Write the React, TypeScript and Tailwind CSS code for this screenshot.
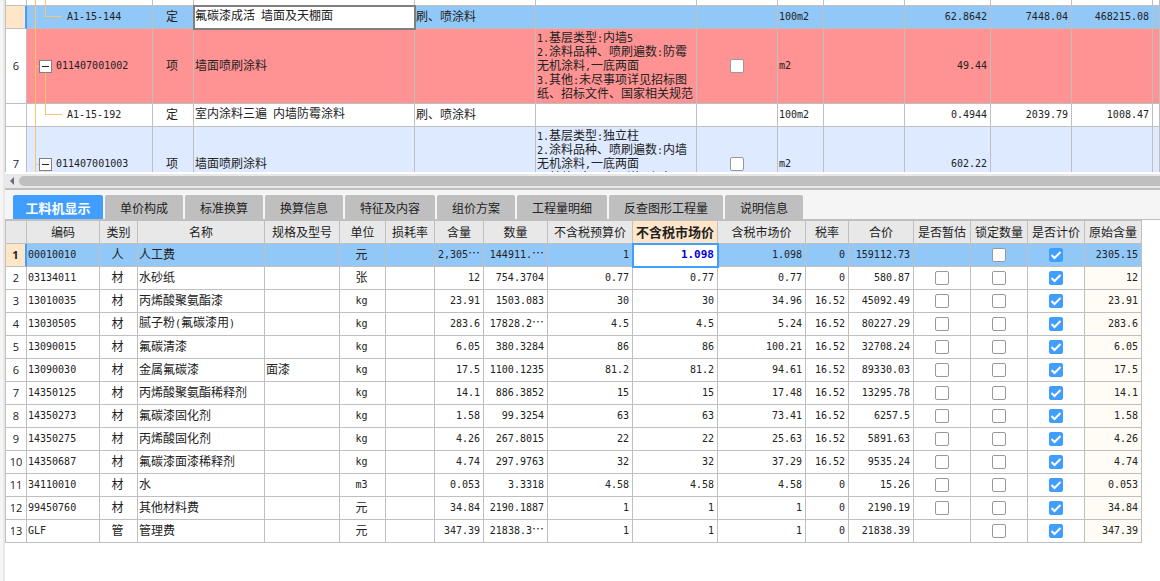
import { useState } from "react";
import type { ReactNode } from "react";

interface BillRow {
  no: string;
  code: string;
  kind: string;
  name: string;
  trade: string;
  features: string[];
  unit: string;
  quantity: string;
  price: string;
  total: string;
  child: boolean;
  tone: string;
  selected?: boolean;
}

interface Resource {
  code: string;
  kind: string;
  name: string;
  spec: string;
  unit: string;
  content: string;
  quantity: string;
  budget: string;
  market: string;
  taxed: string;
  rate: string;
  total: string;
  original: string;
  canEstimate: boolean;
}

const billWidths = [
  "w-[21px]", "w-[126px]", "w-[41px]", "w-[221px]", "w-[121px]", "w-[161px]", "w-[81px]",
  "w-[46px]", "w-[81px]", "w-[86px]", "w-[81px]", "w-[81px]", "",
];

const billRows: BillRow[] = [
  { no: "", code: "A1-15-144", kind: "定", name: "氟碳漆成活 墙面及天棚面", trade: "刷、喷涂料", features: [], unit: "100m2", quantity: "62.8642", price: "7448.04", total: "468215.08", child: true, tone: "bg-[#92c8f7]", selected: true },
  { no: "6", code: "011407001002", kind: "项", name: "墙面喷刷涂料", trade: "", features: ["1.基层类型:内墙5", "2.涂料品种、喷刷遍数:防霉", "无机涂料,一底两面", "3.其他:未尽事项详见招标图", "纸、招标文件、国家相关规范"], unit: "m2", quantity: "49.44", price: "", total: "", child: false, tone: "bg-[#ff9292]" },
  { no: "", code: "A1-15-192", kind: "定", name: "室内涂料三遍 内墙防霉涂料", trade: "刷、喷涂料", features: [], unit: "100m2", quantity: "0.4944", price: "2039.79", total: "1008.47", child: true, tone: "bg-white" },
  { no: "7", code: "011407001003", kind: "项", name: "墙面喷刷涂料", trade: "", features: ["1.基层类型:独立柱", "2.涂料品种、喷刷遍数:内墙", "无机涂料,一底两面", "3.其他:未尽事项详见招标图", "纸、招标文件、国家相关规范"], unit: "m2", quantity: "602.22", price: "", total: "", child: false, tone: "bg-[#deeaff]" },
];

const tabs = [
  "工料机显示", "单价构成", "标准换算", "换算信息", "特征及内容",
  "组价方案", "工程量明细", "反查图形工程量", "说明信息",
];

const resourceColumns = [
  { label: "", width: "w-[21px]" },
  { label: "编码", width: "w-[73px]" },
  { label: "类别", width: "w-[38px]" },
  { label: "名称", width: "w-[127px]" },
  { label: "规格及型号", width: "w-[75px]" },
  { label: "单位", width: "w-[46px]" },
  { label: "损耗率", width: "w-[49px]" },
  { label: "含量", width: "w-[49px]" },
  { label: "数量", width: "w-[64px]" },
  { label: "不含税预算价", width: "w-[85px]" },
  { label: "不含税市场价", width: "w-[85px]" },
  { label: "含税市场价", width: "w-[88px]" },
  { label: "税率", width: "w-[43px]" },
  { label: "合价", width: "w-[65px]" },
  { label: "是否暂估", width: "w-[57px]" },
  { label: "锁定数量", width: "w-[57px]" },
  { label: "是否计价", width: "w-[57px]" },
  { label: "原始含量", width: "w-[57px]" },
];

const resources: Resource[] = [
  { code: "00010010", kind: "人", name: "人工费", spec: "", unit: "元", content: "2,305…", quantity: "144911.…", budget: "1", market: "1.098", taxed: "1.098", rate: "0", total: "159112.73", original: "2305.15", canEstimate: false },
  { code: "03134011", kind: "材", name: "水砂纸", spec: "", unit: "张", content: "12", quantity: "754.3704", budget: "0.77", market: "0.77", taxed: "0.77", rate: "0", total: "580.87", original: "12", canEstimate: true },
  { code: "13010035", kind: "材", name: "丙烯酸聚氨酯漆", spec: "", unit: "kg", content: "23.91", quantity: "1503.083", budget: "30", market: "30", taxed: "34.96", rate: "16.52", total: "45092.49", original: "23.91", canEstimate: true },
  { code: "13030505", kind: "材", name: "腻子粉(氟碳漆用)", spec: "", unit: "kg", content: "283.6", quantity: "17828.2…", budget: "4.5", market: "4.5", taxed: "5.24", rate: "16.52", total: "80227.29", original: "283.6", canEstimate: true },
  { code: "13090015", kind: "材", name: "氟碳清漆", spec: "", unit: "kg", content: "6.05", quantity: "380.3284", budget: "86", market: "86", taxed: "100.21", rate: "16.52", total: "32708.24", original: "6.05", canEstimate: true },
  { code: "13090030", kind: "材", name: "金属氟碳漆", spec: "面漆", unit: "kg", content: "17.5", quantity: "1100.1235", budget: "81.2", market: "81.2", taxed: "94.61", rate: "16.52", total: "89330.03", original: "17.5", canEstimate: true },
  { code: "14350125", kind: "材", name: "丙烯酸聚氨酯稀释剂", spec: "", unit: "kg", content: "14.1", quantity: "886.3852", budget: "15", market: "15", taxed: "17.48", rate: "16.52", total: "13295.78", original: "14.1", canEstimate: true },
  { code: "14350273", kind: "材", name: "氟碳漆固化剂", spec: "", unit: "kg", content: "1.58", quantity: "99.3254", budget: "63", market: "63", taxed: "73.41", rate: "16.52", total: "6257.5", original: "1.58", canEstimate: true },
  { code: "14350275", kind: "材", name: "丙烯酸固化剂", spec: "", unit: "kg", content: "4.26", quantity: "267.8015", budget: "22", market: "22", taxed: "25.63", rate: "16.52", total: "5891.63", original: "4.26", canEstimate: true },
  { code: "14350687", kind: "材", name: "氟碳漆面漆稀释剂", spec: "", unit: "kg", content: "4.74", quantity: "297.9763", budget: "32", market: "32", taxed: "37.29", rate: "16.52", total: "9535.24", original: "4.74", canEstimate: true },
  { code: "34110010", kind: "材", name: "水", spec: "", unit: "m3", content: "0.053", quantity: "3.3318", budget: "4.58", market: "4.58", taxed: "4.58", rate: "0", total: "15.26", original: "0.053", canEstimate: true },
  { code: "99450760", kind: "材", name: "其他材料费", spec: "", unit: "元", content: "34.84", quantity: "2190.1887", budget: "1", market: "1", taxed: "1", rate: "0", total: "2190.19", original: "34.84", canEstimate: true },
  { code: "GLF", kind: "管", name: "管理费", spec: "", unit: "元", content: "347.39", quantity: "21838.3…", budget: "1", market: "1", taxed: "1", rate: "0", total: "21838.39", original: "347.39", canEstimate: false },
];

// Latin runs are set half as wide as a Chinese character, so columns line up
function Mixed({ text }: { text: string }) {
  const runs = text.match(/[\x20-\x7e]+|[^\x20-\x7e]+/g) ?? [];
  return (
    <>
      {runs.map((run, i) =>
        run.charCodeAt(0) < 127 ? (
          <span key={i} className="font-['DejaVu_Sans_Mono',monospace] text-[10px]">
            {run}
          </span>
        ) : (
          run
        )
      )}
    </>
  );
}

function Cell({ children, align = "text-left", tone = "" }: { children?: ReactNode; align?: string; tone?: string }) {
  return (
    <td className={`overflow-hidden border-r border-b border-[#bfbfbf] pt-0 pr-[3px] pb-0.5 pl-px whitespace-nowrap ${align} ${tone}`}>
      {children}
    </td>
  );
}

function CheckCell({ children, tone = "" }: { children?: ReactNode; tone?: string }) {
  return <td className={`border-r border-b border-[#bfbfbf] p-0 ${tone}`}>{children}</td>;
}

function RowNumber({ value, active }: { value: string; active?: boolean }) {
  return (
    <th
      scope="row"
      className={`border-b border-[#bfbfbf] font-['Open_Sans',sans-serif] text-[11px] ${
        active ? "border-r-2 border-r-[#409eff] bg-[#ffe6c9] font-bold" : "border-r bg-white font-normal"
      }`}
    >
      {value}
    </th>
  );
}

function Check({ label, initial = false }: { label: string; initial?: boolean }) {
  const [checked, setChecked] = useState(initial);
  return (
    <span className="relative mx-auto block size-3.5">
      <input
        type="checkbox"
        aria-label={label}
        checked={checked}
        onChange={(e) => setChecked(e.target.checked)}
        className="block size-3.5 appearance-none rounded-xs border border-[#999999] bg-white checked:border-[#409eff] checked:bg-[#409eff]"
      />
      {checked && (
        <svg viewBox="0 0 14 14" className="pointer-events-none absolute inset-0 size-3.5" aria-hidden="true">
          <path d="M2.5 7 L5.5 10 L11.5 4" fill="none" stroke="#fff" strokeWidth="2" />
        </svg>
      )}
    </span>
  );
}

function TreeLines({ child }: { child: boolean }) {
  return (
    <svg className="absolute inset-0 size-full" fill="#ffc36b" shapeRendering="crispEdges" aria-hidden="true">
      <rect x="8" y="0" width="1" height="100%" />
      {child ? (
        <>
          <rect x="18" y="0" width="1" height="45%" />
          <rect x="18" y="45%" width="17" height="1" />
        </>
      ) : (
        <>
          <rect x="9" y="50%" width="4" height="1" />
          <rect x="18" y="50%" width="1" height="50%" />
        </>
      )}
    </svg>
  );
}

function BillTable() {
  return (
    <table className="w-full table-fixed border-separate border-spacing-0 border-l border-[#bfbfbf]">
      <colgroup>
        {billWidths.map((width, i) => (
          <col key={i} className={width} />
        ))}
      </colgroup>
      <tbody>
        <tr className="h-1.5">
          {billWidths.map((_, i) => (
            <td key={i} className="relative border-r border-b border-[#bfbfbf] p-0">
              {i === 1 && (
                <svg className="absolute inset-0 size-full" fill="#ffc36b" shapeRendering="crispEdges" aria-hidden="true">
                  <rect x="8" y="0" width="1" height="100%" />
                  <rect x="18" y="0" width="1" height="100%" />
                </svg>
              )}
            </td>
          ))}
        </tr>
        {billRows.map((row) => (
          <tr key={row.code} className={`${row.tone} ${row.child ? "h-[23px]" : "h-[75px]"}`}>
            <RowNumber value={row.no} active={row.selected} />
            <td className="relative border-r border-b border-[#bfbfbf] p-0">
              <TreeLines child={row.child} />
              <div className={`relative flex items-center ${row.child ? "pl-10" : "gap-1 pl-3"}`}>
                {!row.child && (
                  <button aria-label="折叠" className="flex size-[13px] items-center justify-center border border-[#808080] bg-white">
                    <span className="h-px w-[7px] bg-[#222222]" />
                  </button>
                )}
                <Mixed text={row.code} />
              </div>
            </td>
            <Cell align="text-center">{row.kind}</Cell>
            {row.selected ? (
              <td className="relative border-r border-b border-[#bfbfbf] bg-white pt-0 pr-[3px] pb-0.5 pl-px whitespace-nowrap outline-2 -outline-offset-1 outline-[#808080]">
                <Mixed text={row.name} />
              </td>
            ) : (
              <Cell>
                <Mixed text={row.name} />
              </Cell>
            )}
            <Cell>{row.trade}</Cell>
            <Cell>
              {row.features.map((line) => (
                <div key={line} className="h-3.5 leading-3.5">
                  <Mixed text={line} />
                </div>
              ))}
            </Cell>
            <CheckCell>{!row.child && <Check label={`${row.code} 锁定综合单价`} />}</CheckCell>
            <Cell><Mixed text={row.unit} /></Cell>
            <Cell />
            <Cell align="text-right"><Mixed text={row.quantity} /></Cell>
            <Cell align="text-right"><Mixed text={row.price} /></Cell>
            <Cell align="text-right"><Mixed text={row.total} /></Cell>
            <Cell />
          </tr>
        ))}
      </tbody>
    </table>
  );
}

function ResourceTable() {
  const [price, setPrice] = useState("1.098");
  return (
    <table className="w-full table-fixed border-separate border-spacing-0 border-l border-[#bfbfbf]">
      <colgroup>
        {resourceColumns.map((column) => (
          <col key={column.label} className={column.width} />
        ))}
        <col />
      </colgroup>
      <thead>
        <tr className="h-6">
          {resourceColumns.map((column) => (
            <th
              key={column.label}
              scope="col"
              className={`border-t border-r border-b border-[#bfbfbf] p-0 whitespace-nowrap ${
                column.label === "不含税市场价" ? "bg-[#ffe6c9] text-[13px] font-bold" : "bg-[#e8e8e8] font-normal"
              }`}
            >
              {column.label}
            </th>
          ))}
          <td />
        </tr>
      </thead>
      <tbody>
        {resources.map((row, i) => {
          const tone = i === 0 ? "bg-[#92c8f7]" : "";
          return (
            <tr key={row.code} className="h-[23px]">
              <RowNumber value={String(i + 1)} active={i === 0} />
              <Cell tone={tone}><Mixed text={row.code} /></Cell>
              <Cell tone={tone} align="text-center">{row.kind}</Cell>
              <Cell tone={tone}><Mixed text={row.name} /></Cell>
              <Cell tone={tone}>{row.spec}</Cell>
              <Cell tone={tone} align="text-center"><Mixed text={row.unit} /></Cell>
              <Cell tone={tone} />
              <Cell tone={tone} align="text-right"><Mixed text={row.content} /></Cell>
              <Cell tone={tone} align="text-right"><Mixed text={row.quantity} /></Cell>
              <Cell tone={tone} align="text-right"><Mixed text={row.budget} /></Cell>
              {i === 0 ? (
                <td className="relative border-r border-b border-[#bfbfbf] bg-white p-0 outline-2 -outline-offset-1 outline-[#409eff]">
                  <input
                    aria-label="不含税市场价"
                    value={price}
                    onChange={(e) => setPrice(e.target.value)}
                    className="block h-5 w-full bg-transparent pr-[3px] pb-0.5 text-right font-['DejaVu_Sans_Mono',monospace] text-[11px] font-bold text-[#0000e6] outline-none"
                  />
                </td>
              ) : (
                <Cell align="text-right"><Mixed text={row.market} /></Cell>
              )}
              <Cell tone={tone} align="text-right"><Mixed text={row.taxed} /></Cell>
              <Cell tone={tone} align="text-right"><Mixed text={row.rate} /></Cell>
              <Cell tone={tone} align="text-right"><Mixed text={row.total} /></Cell>
              <CheckCell tone={tone}>
                {row.canEstimate && <Check label={`${row.name} 是否暂估`} />}
              </CheckCell>
              <CheckCell tone={tone}>
                <Check label={`${row.name} 锁定数量`} />
              </CheckCell>
              <CheckCell tone={tone}>
                <Check label={`${row.name} 是否计价`} initial />
              </CheckCell>
              <Cell tone={tone || "bg-[#fffbf5]"} align="text-right"><Mixed text={row.original} /></Cell>
              <td />
            </tr>
          );
        })}
      </tbody>
    </table>
  );
}

export default function App() {
  const [active, setActive] = useState(tabs[0]);

  return (
    <div
      lang="zh-CN"
      className="flex h-screen overflow-hidden bg-white font-['Noto_Sans_CJK_SC',sans-serif] text-xs leading-4 text-[#222222]"
    >
      <div className="w-[5px] shrink-0 border-r-2 border-[#e8e8e8] bg-[#f5f5f5]" />
      <main className="flex min-w-0 grow flex-col">
        <div className="h-[172px] shrink-0 overflow-hidden">
          <BillTable />
        </div>

        <div className="mt-0.5 flex h-3.5 shrink-0 items-center bg-[#e8e8e8]">
          <button aria-label="向左滚动" className="flex w-3.5 justify-center">
            <svg viewBox="0 0 4 8" className="h-2 w-1" aria-hidden="true">
              <path d="M4 0 L0 4 L4 8 Z" fill="#6b6b78" />
            </svg>
          </button>
          <div className="h-2.5 grow rounded-l-full bg-[#bfbfbf]" />
        </div>
        <div className="h-0.5 shrink-0 bg-[#bfbfbf]" />

        <div role="tablist" className="flex shrink-0 gap-0.5 border-b border-[#bfbfbf] bg-[#f5f5f5] pt-[5px] pl-2">
          {tabs.map((tab) => (
            <button
              key={tab}
              role="tab"
              aria-selected={tab === active}
              onClick={() => setActive(tab)}
              className={`h-6 rounded-t-xs pt-0.5 whitespace-nowrap ${
                tab === active ? "min-w-[90px] bg-[#409eff] px-3 text-[13px] font-bold text-white" : "bg-[#bfbfbf] px-[15px]"
              }`}
            >
              {tab}
            </button>
          ))}
        </div>

        <ResourceTable />
      </main>
    </div>
  );
}
